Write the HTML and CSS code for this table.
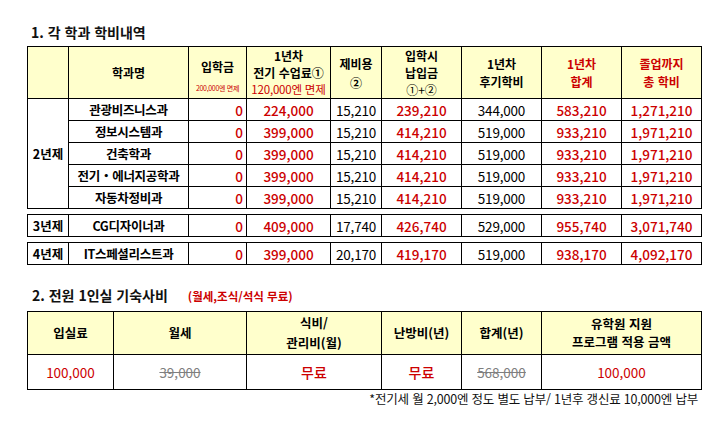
FILE: index.html
```html
<!DOCTYPE html>
<html lang="ko">
<head>
<meta charset="utf-8">
<title>학비내역</title>
<link rel="stylesheet" href="styles.css">
</head>
<body>
<div class="page">
  <h1 class="title">1. 각 학과 학비내역</h1>

  <table class="fee">
    <colgroup>
      <col class="c1"><col class="c2"><col class="c3"><col class="c4"><col class="c5"><col class="c6"><col class="c7"><col class="c8"><col class="c9">
    </colgroup>
    <tr class="head">
      <th></th>
      <th>학과명</th>
      <th><div class="hmain">입학금</div><div class="tiny">200,000엔 면제</div></th>
      <th class="l17">1년차<br>전기 수업료①<span class="red norm small">120,000엔 면제</span></th>
      <th class="l19">제비용<br>②</th>
      <th class="l17">입학시<br>납입금<br><span class="norm">①+②</span></th>
      <th>1년차<br>후기학비</th>
      <th class="red">1년차<br>합계</th>
      <th class="red">졸업까지<br>총 학비</th>
    </tr>
    <tr class="row">
      <td class="yr" rowspan="5">2년제</td>
      <td class="dept">관광비즈니스과</td>
      <td class="zero">0</td>
      <td class="rb">224,000</td>
      <td class="num">15,210</td>
      <td class="rb">239,210</td>
      <td class="num">344,000</td>
      <td class="rb">583,210</td>
      <td class="rb">1,271,210</td>
    </tr>
    <tr class="row">
      <td class="dept">정보시스템과</td>
      <td class="zero">0</td>
      <td class="rb">399,000</td>
      <td class="num">15,210</td>
      <td class="rb">414,210</td>
      <td class="num">519,000</td>
      <td class="rb">933,210</td>
      <td class="rb">1,971,210</td>
    </tr>
    <tr class="row">
      <td class="dept">건축학과</td>
      <td class="zero">0</td>
      <td class="rb">399,000</td>
      <td class="num">15,210</td>
      <td class="rb">414,210</td>
      <td class="num">519,000</td>
      <td class="rb">933,210</td>
      <td class="rb">1,971,210</td>
    </tr>
    <tr class="row">
      <td class="dept">전기・에너지공학과</td>
      <td class="zero">0</td>
      <td class="rb">399,000</td>
      <td class="num">15,210</td>
      <td class="rb">414,210</td>
      <td class="num">519,000</td>
      <td class="rb">933,210</td>
      <td class="rb">1,971,210</td>
    </tr>
    <tr class="row">
      <td class="dept">자동차정비과</td>
      <td class="zero">0</td>
      <td class="rb">399,000</td>
      <td class="num">15,210</td>
      <td class="rb">414,210</td>
      <td class="num">519,000</td>
      <td class="rb">933,210</td>
      <td class="rb">1,971,210</td>
    </tr>
  </table>

  <table class="fee single">
    <colgroup>
      <col class="c1"><col class="c2"><col class="c3"><col class="c4"><col class="c5"><col class="c6"><col class="c7"><col class="c8"><col class="c9">
    </colgroup>
    <tr class="row">
      <td class="yr">3년제</td>
      <td class="dept">CG디자이너과</td>
      <td class="zero">0</td>
      <td class="rb">409,000</td>
      <td class="num">17,740</td>
      <td class="rb">426,740</td>
      <td class="num">529,000</td>
      <td class="rb">955,740</td>
      <td class="rb">3,071,740</td>
    </tr>
  </table>

  <table class="fee single">
    <colgroup>
      <col class="c1"><col class="c2"><col class="c3"><col class="c4"><col class="c5"><col class="c6"><col class="c7"><col class="c8"><col class="c9">
    </colgroup>
    <tr class="row">
      <td class="yr">4년제</td>
      <td class="dept">IT스페셜리스트과</td>
      <td class="zero">0</td>
      <td class="rb">399,000</td>
      <td class="num">20,170</td>
      <td class="rb">419,170</td>
      <td class="num">519,000</td>
      <td class="rb">938,170</td>
      <td class="rb">4,092,170</td>
    </tr>
  </table>

  <h2 class="title title2">2. 전원 1인실 기숙사비 <span class="note">(월세,조식/석식 무료)</span></h2>

  <table class="fee dorm">
    <colgroup>
      <col class="d1"><col class="d2"><col class="d3"><col class="d4"><col class="d5"><col class="d6">
    </colgroup>
    <tr class="dhead">
      <th>입실료</th>
      <th>월세</th>
      <th class="l20">식비/<br>관리비(월)</th>
      <th>난방비(년)</th>
      <th>합계(년)</th>
      <th class="l18">유학원 지원<br>프로그램 적용 금액</th>
    </tr>
    <tr class="drow">
      <td class="rn">100,000</td>
      <td class="strike">39,000</td>
      <td class="free">무료</td>
      <td class="free">무료</td>
      <td class="strike">568,000</td>
      <td class="rn">100,000</td>
    </tr>
  </table>

  <p class="foot">*전기세 월 2,000엔 정도 별도 납부/ 1년후 갱신료 10,000엔 납부</p>
</div>
</body>
</html>
```

FILE: styles.css
```css
html, body {
  margin: 0;
  padding: 0;
  background: #ffffff;
}

body {
  font-family: "Noto Sans CJK KR", "Noto Sans", sans-serif;
  color: #000000;
}

.page {
  width: 675px;
  padding: 22px 0 0 27px;
}

.title {
  margin: 0 0 4px 0;
  padding-left: 4px;
  font-size: 14px;
  line-height: 20px;
  font-weight: 700;
  color: #111111;
}

.title2 {
  margin-top: 20px;
  margin-bottom: 5px;
  padding-left: 5px;
}

.note {
  margin-left: 16px;
  font-size: 11.5px;
  color: #cc0000;
  font-weight: 700;
}

.fee {
  width: 675px;
  table-layout: fixed;
  border-collapse: separate;
  border-spacing: 0;
  border-top: 1px solid #000000;
  border-left: 1px solid #000000;
}

.fee th,
.fee td {
  padding: 0;
  border-right: 1px solid #000000;
  border-bottom: 1px solid #000000;
  text-align: center;
  vertical-align: middle;
  white-space: nowrap;
  overflow: hidden;
}

.single {
  margin-top: 5px;
}

.c1 { width: 41px; }
.c2 { width: 120px; }
.c3 { width: 58px; }
.c4 { width: 84px; }
.c5 { width: 51px; }
.c6 { width: 80px; }
.c7 { width: 80px; }
.c8 { width: 80px; }
.c9 { width: 80px; }

.head {
  height: 51px;
}

.head th,
.dhead th {
  background: #ffffcc;
  font-size: 12px;
  line-height: 18px;
  font-weight: 700;
}

.dhead th {
  font-size: 12.5px;
}

.l17 { line-height: 17px !important; }
.l19 { line-height: 19px !important; }
.l20 { line-height: 20px !important; }
.l18 { line-height: 18px !important; }

.hmain {
  line-height: 30px;
}

.tiny {
  font-size: 7px;
  line-height: 12px;
  font-weight: 400;
  color: #cc0000;
  letter-spacing: -0.3px;
}

.red {
  color: #cc0000;
}

.norm {
  font-weight: 400;
}

.small {
  display: block;
  height: 17px;
  font-size: 11.5px;
  line-height: 17px;
  letter-spacing: -0.2px;
}

.row {
  height: 22px;
}

.row td {
  font-size: 13.5px;
  line-height: 16px;
}

.yr {
  font-size: 12.5px !important;
  font-weight: 700;
}

.dept {
  font-size: 12.5px !important;
  font-weight: 700;
  letter-spacing: -0.3px;
}

.zero {
  text-align: right !important;
  padding-right: 3px !important;
  color: #cc0000;
  font-weight: 500;
}

.rb {
  color: #cc0000;
  font-weight: 500;
}

.num {
  color: #000000;
  font-weight: 400;
  letter-spacing: -0.2px;
}

.d1 { width: 86px; }
.d2 { width: 133px; }
.d3 { width: 135px; }
.d4 { width: 80px; }
.d5 { width: 80px; }
.d6 { width: 160px; }

.dhead {
  height: 43px;
}

.drow {
  height: 35px;
}

.drow td {
  font-size: 13.5px;
  line-height: 18px;
}

.rn {
  color: #cc0000;
}

.strike {
  color: #7f7f7f;
  text-decoration: line-through;
}

.free {
  color: #cc0000;
  font-size: 14px !important;
  font-weight: 500;
}

.foot {
  margin: 0;
  padding-right: 4px;
  text-align: right;
  font-size: 12.5px;
  line-height: 17px;
  color: #111111;
  letter-spacing: -0.2px;
}
```
